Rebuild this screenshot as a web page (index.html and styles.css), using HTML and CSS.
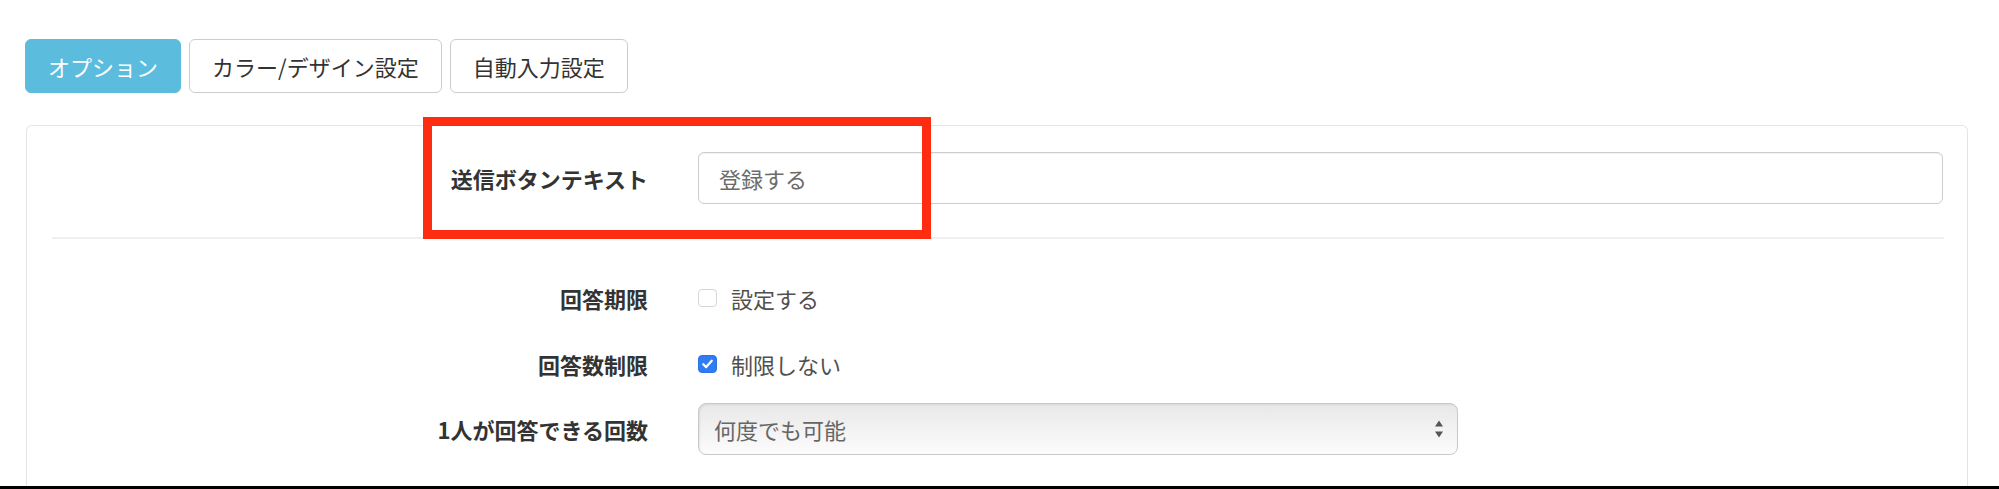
FILE: index.html
```html
<!DOCTYPE html>
<html lang="ja">
<head>
<meta charset="utf-8">
<title>オプション</title>
<link rel="stylesheet" href="styles.css">
</head>
<body>
<div class="page">
  <div class="tabs">
    <button class="btn btn-active">オプション</button>
    <button class="btn">カラー/デザイン設定</button>
    <button class="btn">自動入力設定</button>
  </div>
  <div class="panel">
    <div class="highlight"></div>
    <div class="row row-text">
      <div class="label">送信ボタンテキスト</div>
      <div class="field"><div class="input">登録する</div></div>
    </div>
    <div class="sep"></div>
    <div class="rows">
      <div class="row row-check">
        <div class="label">回答期限</div>
        <div class="field"><span class="check"></span><span class="check-text">設定する</span></div>
      </div>
      <div class="row row-check">
        <div class="label">回答数制限</div>
        <div class="field"><span class="check checked"><svg viewBox="0 0 18 18" width="18" height="18"><path d="M4.5 9.3 L7.6 12.3 L13.5 5.6" fill="none" stroke="#fff" stroke-width="2.4" stroke-linecap="round" stroke-linejoin="round"/></svg></span><span class="check-text">制限しない</span></div>
      </div>
      <div class="row row-select">
        <div class="label">1人が回答できる回数</div>
        <div class="field">
          <div class="select"><span class="select-text">何度でも可能</span>
            <svg class="arrows" viewBox="0 0 10 20" width="10" height="20"><path d="M5 1.5 L9 7.5 L1 7.5 Z" fill="#555"/><path d="M5 18.5 L9 12.5 L1 12.5 Z" fill="#555"/></svg>
          </div>
        </div>
      </div>
    </div>
  </div>
  <div class="bottom-bar"></div>
</div>
</body>
</html>
```
FILE: styles.css
```css
* { box-sizing: border-box; }
html, body { margin: 0; padding: 0; background: #fff; }
body {
  font-family: "Noto Sans CJK JP", "Noto Sans", sans-serif;
  color: #333;
  font-size: 22px;
}
.page {
  height: 489px;
  display: flex;
  flex-direction: column;
  overflow: hidden;
}
.tabs {
  display: flex;
  gap: 8px;
  padding: 39px 0 0 25px;
}
.btn {
  height: 54px;
  padding: 0 22px;
  font-family: inherit;
  font-size: 22px;
  line-height: 1;
  color: #333;
  background: #fff;
  border: 1px solid #cccccc;
  border-radius: 6px;
  display: flex;
  align-items: center;
}
.btn-active {
  background: #5bbcde;
  border-color: #5bbcde;
  color: #fff;
}
.panel {
  position: relative;
  flex: 1;
  margin: 32px 0 0 26px;
  width: 1942px;
  border: 1px solid #e4e4e4;
  border-bottom: none;
  border-radius: 6px 6px 0 0;
  padding: 26px 23px 0 25px;
}
.highlight {
  position: absolute;
  left: 396px;
  top: -9px;
  width: 508px;
  height: 122px;
  border: 9px solid #fe2c10;
}
.row {
  display: grid;
  grid-template-columns: 596px 1245px;
  column-gap: 50px;
  align-items: center;
}
.label {
  text-align: right;
  font-weight: bold;
  line-height: 1;
  color: #333;
}
.field {
  display: flex;
  align-items: center;
}
.input {
  width: 100%;
  height: 52px;
  border: 1px solid #cdcdcd;
  border-radius: 6px;
  box-shadow: inset 0 1px 1px rgba(0,0,0,0.06);
  padding-left: 20px;
  display: flex;
  align-items: center;
  color: #6b6b6b;
  line-height: 1;
}
.sep {
  height: 2px;
  background: #efefef;
  margin-top: 33px;
}
.rows { padding-top: 26px; }
.row-check { height: 66px; }
.row-select { height: 64px; }
.check {
  width: 19px;
  height: 18px;
  border: 1px solid #d6d6d6;
  border-radius: 4px;
  background: #fff;
  display: flex;
  align-items: center;
  justify-content: center;
}
.check.checked {
  background: #2f7cf4;
  border-color: #2a72e6;
}
.check svg { display: block; }
.check-text {
  margin-left: 14px;
  color: #505050;
  line-height: 1;
}
.select {
  width: 760px;
  height: 52px;
  border: 1px solid #c9c9c9;
  border-radius: 8px;
  background: linear-gradient(#e8e8e8, #fcfcfc);
  box-shadow: inset 1px 1px 2px rgba(0,0,0,0.08);
  display: flex;
  align-items: center;
  justify-content: space-between;
  padding: 0 13px 0 15px;
}
.select-text {
  color: #666;
  line-height: 1;
}
.arrows { display: block; }
.bottom-bar {
  height: 3px;
  background: #000;
}
```
